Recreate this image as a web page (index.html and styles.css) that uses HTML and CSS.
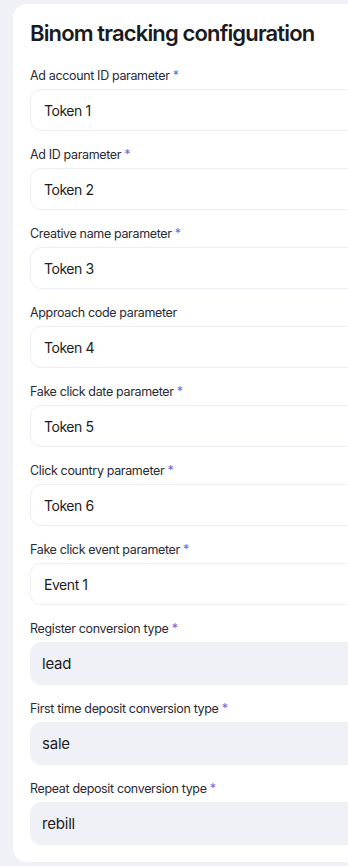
FILE: index.html
```html
<!DOCTYPE html>
<html lang="en">
<head>
    <meta charset="UTF-8">
    <meta name="viewport" content="width=device-width, initial-scale=1.0">
    <title>Binom tracking configuration</title>
    <link rel="stylesheet" href="styles.css">
</head>
<body>

    <div class="card">
        <h2>Binom tracking configuration</h2>

        <form class="form">
            <div class="form-group">
                <label>Ad account ID parameter <span class="req">*</span></label>
                <div class="field">Token 1</div>
            </div>

            <div class="form-group">
                <label>Ad ID parameter <span class="req">*</span></label>
                <div class="field">Token 2</div>
            </div>

            <div class="form-group">
                <label>Creative name parameter <span class="req">*</span></label>
                <div class="field">Token 3</div>
            </div>

            <div class="form-group">
                <label>Approach code parameter</label>
                <div class="field">Token 4</div>
            </div>

            <div class="form-group">
                <label>Fake click date parameter <span class="req">*</span></label>
                <div class="field">Token 5</div>
            </div>

            <div class="form-group">
                <label>Click country parameter <span class="req">*</span></label>
                <div class="field">Token 6</div>
            </div>

            <div class="form-group">
                <label>Fake click event parameter <span class="req">*</span></label>
                <div class="field">Event 1</div>
            </div>

            <div class="form-group">
                <label>Register conversion type <span class="req">*</span></label>
                <div class="field filled">lead</div>
            </div>

            <div class="form-group">
                <label>First time deposit conversion type <span class="req">*</span></label>
                <div class="field filled">sale</div>
            </div>

            <div class="form-group">
                <label>Repeat deposit conversion type <span class="req">*</span></label>
                <div class="field filled">rebill</div>
            </div>
        </form>
    </div>

</body>
</html>
```

FILE: styles.css
```css
/* General Styles */
html, body {
    overflow: hidden;
}

body {
    font-family: 'Inter', 'Roboto', sans-serif;
    background-color: #f0f1f6;
    margin: 0;
    padding: 4px 0 0 13px;
    color: #1c1c22;
}

.card {
    background-color: #fff;
    border-radius: 14px;
    width: 380px;
    padding: 15px 0 17px 17px;
    box-sizing: border-box;
}

h2 {
    margin: 0 0 21px;
    font-size: 22px;
    line-height: 28px;
    font-weight: 600;
    color: #1a1a20;
    letter-spacing: -0.85px;
    white-space: nowrap;
}

.form {
    display: flex;
    flex-direction: column;
    gap: 16px;
    margin-right: -40px;
}

label {
    display: block;
    font-size: 12.5px;
    line-height: 16px;
    font-weight: 400;
    color: #2a2a32;
    margin-bottom: 5px;
    letter-spacing: -0.35px;
}

.req {
    color: #6467e8;
}

.field {
    height: 42px;
    box-sizing: border-box;
    border: 1px solid #eceef3;
    border-radius: 11px;
    padding: 0 13px;
    display: flex;
    align-items: center;
    font-size: 14px;
    letter-spacing: -0.45px;
    color: #1c1c22;
}

.field.filled {
    background-color: #f0f1f6;
    border-color: #f0f1f6;
    height: 43px;
    padding: 0 11px;
    font-size: 15px;
    letter-spacing: -0.2px;
}
```
